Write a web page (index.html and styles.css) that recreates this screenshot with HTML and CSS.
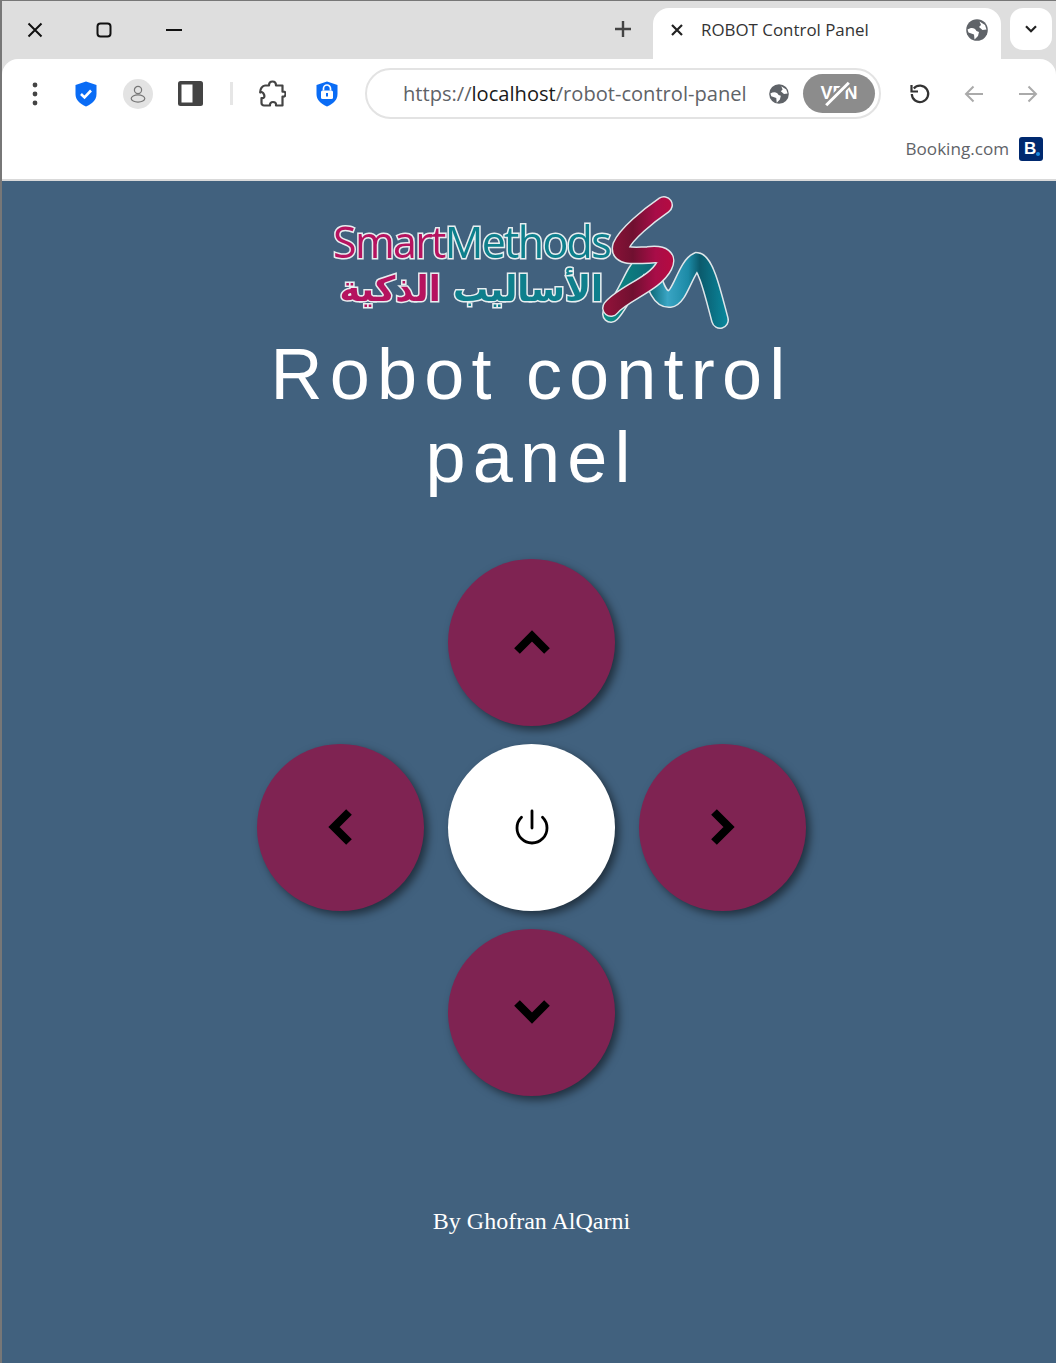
FILE: index.html
```html
<!DOCTYPE html>
<html lang="en">
<head>
<meta charset="utf-8">
<title>ROBOT Control Panel</title>
<link rel="stylesheet" href="styles.css">
</head>
<body>
<div class="window">
  <header class="chrome">
    <div class="tabstrip">
      <svg class="win win-close" width="16" height="16" viewBox="0 0 16 16"><path d="M1.500 1.500l13 13M14.500 1.500l-13 13" stroke="#111" stroke-width="2" fill="none"/></svg>
      <svg class="win win-max" width="16" height="16" viewBox="0 0 16 16"><rect x="1.500" y="1.500" width="13" height="13" rx="3" stroke="#111" stroke-width="2" fill="none"/></svg>
      <svg class="win win-min" width="16" height="4" viewBox="0 0 16 4"><path d="M0 2h16" stroke="#111" stroke-width="2"/></svg>
      <svg class="newtab" width="16" height="16" viewBox="0 0 16 16"><path d="M8 0v16M0 8h16" stroke="#444" stroke-width="2.400"/></svg>
      <div class="tab">
        <svg class="tab-x" width="12" height="12" viewBox="0 0 12 12"><path d="M1 1l10 10M11 1L1 11" stroke="#222" stroke-width="2.200"/></svg>
        <span class="tab-title">ROBOT Control Panel</span>
        <svg class="globe tab-globe" width="22" height="22" viewBox="0 0 22 22"><use href="#globe-shape"/></svg>
      </div>
      <div class="tab-menu">
        <svg width="12" height="8" viewBox="0 0 12 8"><path d="M1 1.200l5 5 5-5" stroke="#222" stroke-width="2.200" fill="none"/></svg>
      </div>
    </div>
    <div class="toolbar">
      <div class="tools">
        <svg class="t-dots" width="6" height="24" viewBox="0 0 6 24"><circle cx="3" cy="3" r="2.400" fill="#444"/><circle cx="3" cy="12" r="2.400" fill="#444"/><circle cx="3" cy="21" r="2.400" fill="#444"/></svg>
        <svg class="t-shield" width="22" height="26" viewBox="0 0 22 26"><path d="M11 .5l10.500 3.500v9c0 6-4.500 10-10.500 12.500C5 23 .5 19 .5 13V4z" fill="#0a6cf5"/><path d="M6 13l3.500 3.500L16 9.500" stroke="#fff" stroke-width="2.600" fill="none"/></svg>
        <div class="t-avatar">
          <svg width="16" height="18" viewBox="0 0 16 18"><circle cx="8" cy="5" r="3.600" fill="none" stroke="#777" stroke-width="1.200"/><ellipse cx="8" cy="13.500" rx="6.800" ry="3.600" fill="none" stroke="#777" stroke-width="1.200"/></svg>
        </div>
        <svg class="t-panel" width="25" height="25" viewBox="0 0 25 25"><rect width="25" height="25" rx="2.500" fill="#444"/><rect x="3.500" y="3.500" width="11" height="18" fill="#fff"/></svg>
        <div class="t-sep"></div>
        <svg class="t-puzzle" width="27" height="27" viewBox="0 0 27 27"><path d="M10 5.500C10 2.500 11.500 1.500 13.500 1.500S17 2.800 17 5.500h6.500v6.200c3-.4 3 1 3 2.300s-.5 3-3 2.600v8.900H17c.3-2.500-1-3.500-3-3.500s-3.300 1.200-3 3.500H5c-1.500 0-2.500-1-2.500-2.500V18c2.500.3 3.500-1 2.500-3.500S2 11.500 1.200 12.500C1 9 3.500 5.500 6 5.500z" fill="none" stroke="#444" stroke-width="2.200" stroke-linejoin="round"/></svg>
        <svg class="t-lock" width="22" height="26" viewBox="0 0 22 26"><path d="M11 .5l10.500 3.500v9c0 6-4.500 10-10.500 12.500C5 23 .5 19 .5 13V4z" fill="#0a6cf5"/><rect x="5" y="9.500" width="12" height="8.500" rx="1.500" fill="#fff"/><path d="M7.500 9.500V7.500a3.500 3.500 0 0 1 7 0v2" fill="none" stroke="#fff" stroke-width="1.700"/><rect x="10" y="12" width="2" height="3.500" fill="#0a6cf5"/></svg>
        <div class="omnibox">
          <span class="url"><span class="url-dim">https://</span>localhost<span class="url-dim">/robot-control-panel</span></span>
          <svg class="globe omni-globe" width="20" height="20" viewBox="0 0 22 22"><use href="#globe-shape"/></svg>
          <div class="vpn"><span class="vpn-text">VPN</span><span class="vpn-slash"></span></div>
        </div>
        <svg class="t-reload" width="22" height="22" viewBox="0 0 22 22"><path d="M4.800 5.500A8.200 8.200 0 1 1 2.800 11" fill="none" stroke="#333" stroke-width="2.200"/><path d="M2.500 2v6.500H9" fill="none" stroke="#333" stroke-width="2.200"/></svg>
        <svg class="t-back" width="20" height="18" viewBox="0 0 20 18"><path d="M19 9H2M9.500 1.500L2 9l7.500 7.500" fill="none" stroke="#aaa" stroke-width="2"/></svg>
        <svg class="t-fwd" width="20" height="18" viewBox="0 0 20 18"><path d="M1 9h17M10.500 1.500L18 9l-7.500 7.500" fill="none" stroke="#aaa" stroke-width="2"/></svg>
      </div>
      <div class="bookmarks">
        <span class="bm-name">Booking.com</span>
        <span class="bm-icon">B<i class="bm-dot"></i></span>
      </div>
    </div>
  </header>

  <main class="page">
    <svg class="logo" width="402" height="137" viewBox="0 0 402 137" role="img" aria-label="Smart Methods logo">
      <defs>
        <linearGradient id="pink" gradientUnits="userSpaceOnUse" x1="280" y1="0" x2="345" y2="0"><stop offset="0" stop-color="#8c1238"/><stop offset=".35" stop-color="#701030"/><stop offset=".7" stop-color="#a80d48"/><stop offset="1" stop-color="#b80a40"/></linearGradient>
        <linearGradient id="teal" gradientUnits="userSpaceOnUse" x1="280" y1="0" x2="395" y2="0"><stop offset="0" stop-color="#0c8a84"/><stop offset=".35" stop-color="#0d6a78"/><stop offset=".5" stop-color="#3aa5c4"/><stop offset=".68" stop-color="#1c8aa6"/><stop offset=".78" stop-color="#0b5a6c"/><stop offset="1" stop-color="#0a8499"/></linearGradient>
      </defs>
      <g class="logo-soft">
        <path class="halo" d="M281 120C292 108 300 88 306 78C312 68 318 66 321 76C325 92 330 106 340 105C350 104 356 72 367 67C376 68 384 104 390 126"/>
        <path class="ribbon" stroke="url(#teal)" d="M281 120C292 108 300 88 306 78C312 68 318 66 321 76C325 92 330 106 340 105C350 104 356 72 367 67C376 68 384 104 390 126"/>
        <path class="halo" d="M334 11C318 22 296 40 291 52C288 62 300 62 318 61C334 59 338 64 334 72C325 90 292 100 281 114"/>
        <path class="ribbon" stroke="url(#pink)" d="M334 11C318 22 296 40 291 52C288 62 300 62 318 61C334 59 338 64 334 72C325 90 292 100 281 114"/>
        <text class="lg-en" x="3" y="64"><tspan class="lg-pink">Smart</tspan><tspan class="lg-teal">Methods</tspan></text>
        <text class="lg-ar" x="273" y="107" direction="rtl"><tspan class="lg-teal">الأساليب</tspan> <tspan class="lg-pink">الذكية</tspan></text>
      </g>
    </svg>
    <h1 class="title">Robot control panel</h1>
    <div class="pad">
      <button class="btn btn-up" type="button" aria-label="Forward"><svg class="ico" width="36" height="24" viewBox="0 0 36 24"><path d="M3 20L18 5l15 15" class="chev"/></svg></button>
      <button class="btn btn-left" type="button" aria-label="Left"><svg class="ico" width="24" height="36" viewBox="0 0 24 36"><path d="M20 2L5 17l15 15" class="chev"/></svg></button>
      <button class="btn btn-power" type="button" aria-label="Stop"><svg class="ico" width="34" height="37" viewBox="0 0 34 37"><path d="M6.500 8.300A15 15 0 1 0 27.500 8.300" fill="none" stroke="#000" stroke-width="2.800" stroke-linecap="round"/><path d="M17 2v17" stroke="#000" stroke-width="2.800" stroke-linecap="round"/></svg></button>
      <button class="btn btn-right" type="button" aria-label="Right"><svg class="ico" width="24" height="36" viewBox="0 0 24 36"><path d="M3 2l15 15L3 32" class="chev"/></svg></button>
      <button class="btn btn-down" type="button" aria-label="Back"><svg class="ico" width="36" height="24" viewBox="0 0 36 24"><path d="M3 2l15 15L33 2" class="chev"/></svg></button>
    </div>
    <p class="credit">By Ghofran AlQarni</p>
  </main>
</div>
<svg class="defs" width="0" height="0" aria-hidden="true">
  <symbol id="globe-shape" viewBox="0 0 22 22">
    <circle cx="11" cy="11" r="10.800" fill="#5f6368"/>
    <path d="M1.500 10.500C5 8 9 8.500 10.500 12L13 13l-1 4-3.500 3.500L8 15.500 2.500 13.500zM13.500 2.500L19 6l1.500 4.500-4 .5-3.500-3 2-2z" fill="#fff"/>
  </symbol>
</svg>
</body>
</html>
```
FILE: styles.css
```css
* { box-sizing: border-box; }
html, body { margin: 0; padding: 0; height: 100%; }
body { overflow: hidden; background: #41617e; }

.window {
  min-height: 1363px;
  display: flex;
  flex-direction: column;
  background: #41617e;
  border-top: 1px solid #777;
  border-left: 2px solid #777;
}
.defs { display: block; }

/* browser chrome */
.chrome {
  height: 180px;
  flex: none;
  background: #dedede;
  font-family: "Open Sans", "Noto Sans", sans-serif;
}
.tabstrip {
  height: 58px;
  display: flex;
  align-items: flex-start;
}
.win { flex: none; }
.win-close { margin: 21px 0 0 25px; }
.win-max { margin: 21px 0 0 53px; }
.win-min { margin: 27px 0 0 54px; }
.newtab { margin: 20px 0 0 433px; }
.tab {
  width: 348px;
  height: 51px;
  margin: 7px 0 0 22px;
  padding: 0 13px 8px 18px;
  display: flex;
  align-items: center;
  background: #fff;
  border-radius: 16px 16px 0 0;
}
.tab-x { flex: none; }
.tab-title {
  margin-left: 18px;
  flex: 1;
  font-size: 16.900px;
  color: #333;
  white-space: nowrap;
}
.tab-menu {
  width: 42px;
  height: 42px;
  margin: 7px 0 0 9px;
  display: flex;
  align-items: center;
  justify-content: center;
  background: #fff;
  border-radius: 13px;
}
.toolbar {
  height: 122px;
  background: #fff;
  border-radius: 16px 16px 0 0;
  border-bottom: 2px solid #d9d9d9;
}
.tools {
  height: 69px;
  display: flex;
  align-items: center;
  padding-left: 30px;
}
.tools > * { flex: none; }
.t-dots { margin-top: 1px; }
.t-shield { margin-left: 37px; }
.t-avatar {
  width: 30px;
  height: 30px;
  margin-left: 26px;
  border-radius: 50%;
  background: #e3e3e3;
  display: flex;
  align-items: center;
  justify-content: center;
}
.t-panel { margin-left: 25px; }
.t-sep { width: 3px; height: 23px; margin-left: 27px; background: #e6e6e6; }
.t-puzzle { margin-left: 26px; }
.t-lock { margin-left: 30px; }
.omnibox {
  width: 516px;
  height: 51px;
  margin-left: 27px;
  padding: 0 5px 0 36px;
  display: flex;
  align-items: center;
  border: 2px solid #e3e3e3;
  border-radius: 26px;
  background: #fff;
}
.url {
  flex: none;
  width: 344px;
  font-size: 20.100px;
  color: #1a1a1a;
  white-space: nowrap;
}
.url-dim { color: #5f6368; }
.omni-globe { margin-left: 22px; flex: none; }
.vpn {
  position: relative;
  width: 72px;
  height: 39px;
  margin-left: 14px;
  flex: none;
  border-radius: 20px;
  background: #8c8c8c;
  display: flex;
  align-items: center;
  justify-content: center;
}
.vpn-text {
  font-family: "Liberation Sans", sans-serif;
  font-weight: 700;
  font-size: 18px;
  color: #fff;
}
.vpn-slash {
  position: absolute;
  left: 33px;
  top: 4px;
  width: 3px;
  height: 32px;
  background: #fff;
  box-shadow: 0 0 0 2px #8c8c8c;
  transform: rotate(45deg);
}
.t-reload { margin-left: 28px; }
.t-back { margin-left: 33px; }
.t-fwd { margin-left: 34px; }
.bookmarks {
  height: 51px;
  padding: 0 13px 10px 0;
  display: flex;
  align-items: center;
  justify-content: flex-end;
  gap: 10px;
}
.bm-name { font-size: 17.100px; color: #5f6368; }
.bm-icon {
  position: relative;
  width: 24px;
  height: 24px;
  padding-left: 5px;
  border-radius: 3px;
  background: #00296f;
  color: #fff;
  font: 700 17px/24px "Liberation Sans", sans-serif;
}
.bm-dot {
  position: absolute;
  left: 17px;
  top: 15px;
  width: 4px;
  height: 4px;
  border-radius: 50%;
  background: #1b8ae0;
}

/* page */
.page {
  flex: 1;
  padding: 13px 0 0 5px;
  display: flex;
  flex-direction: column;
  align-items: center;
  background: #41617e;
}
.logo { flex: none; display: block; margin: 0 2px 2px 0; }
.logo-soft { filter: blur(.45px); }
.halo { fill: none; stroke: #dfe6ea; stroke-width: 18; stroke-linecap: round; }
.ribbon { fill: none; stroke-width: 15; stroke-linecap: round; }
.lg-en {
  font-family: "Open Sans", sans-serif;
  font-size: 43px;
  letter-spacing: -1.700px;
  stroke: #e8eef0;
  stroke-width: 3px;
  paint-order: stroke;
}
.lg-ar {
  font-family: "DejaVu Sans", sans-serif;
  font-weight: 700;
  font-size: 35px;
  stroke: #e8eef0;
  stroke-width: 3px;
  paint-order: stroke;
}
.lg-pink { fill: #b5135f; }
.lg-teal { fill: #0e7f8c; }
.title {
  width: 620px;
  margin: 0;
  font-family: "Liberation Sans", sans-serif;
  font-size: 72px;
  font-weight: 400;
  line-height: 83px;
  letter-spacing: 7.200px;
  text-align: center;
  color: #fff;
}
.pad {
  margin-top: 60px;
  display: grid;
  grid-template-columns: repeat(3, 167px);
  grid-template-rows: repeat(3, 167px);
  column-gap: 24px;
  row-gap: 18px;
  grid-template-areas:
    ". up ."
    "left power right"
    ". down .";
}
.btn {
  width: 167px;
  height: 167px;
  padding: 0;
  border: 0;
  border-radius: 50%;
  display: flex;
  align-items: center;
  justify-content: center;
  background: #7f2352;
  box-shadow: 4px 4px 8px rgba(0, 0, 0, .5);
}
.btn-up { grid-area: up; }
.btn-left { grid-area: left; }
.btn-right { grid-area: right; }
.btn-down { grid-area: down; }
.btn-power { grid-area: power; background: #fff; }
.ico { overflow: visible; }
.chev { fill: none; stroke: #000; stroke-width: 8; }
.credit {
  margin: 112px 0 0;
  font-family: "Liberation Serif", serif;
  font-size: 24px;
  color: #fff;
}
```
